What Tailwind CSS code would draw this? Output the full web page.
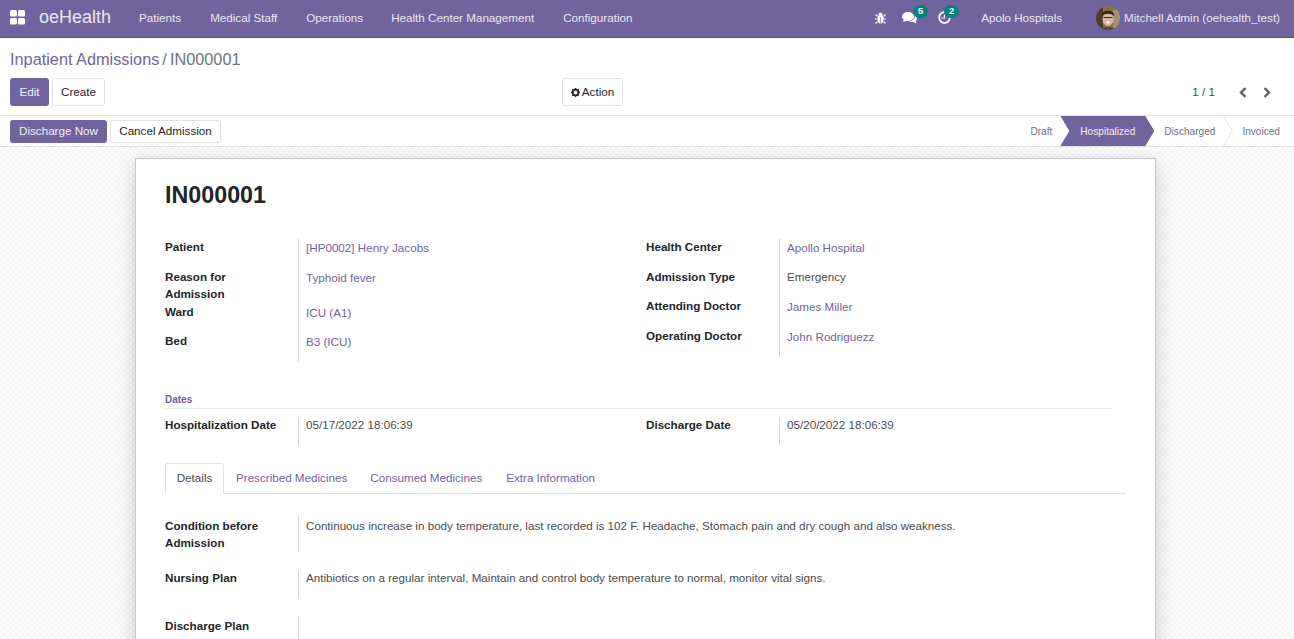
<!DOCTYPE html>
<html lang="en">
<head>
  <meta charset="UTF-8" />
  <title>Inpatient Admissions - IN000001</title>
  <script src="https://cdn.jsdelivr.net/npm/@tailwindcss/browser@4"></script>
</head>
<body class="h-[639px] overflow-hidden bg-white font-['Liberation_Sans',Arial,sans-serif] text-[11.65px] text-[#4c4c4c]">
  <!-- Top navbar -->
  <nav class="flex h-[38px] items-center border-b border-[#5f5389] bg-[#71639e] pb-[2px] text-white/85">
    <svg class="ml-[10px] h-[15px] w-[15px]" viewBox="0 0 15 15" fill="#fff"><rect x="0" y="0" width="7" height="6.5" rx="1.5"/><rect x="8" y="0" width="7" height="6.5" rx="1.5"/><rect x="0" y="8" width="7" height="6.5" rx="1.5"/><rect x="8" y="8" width="7" height="6.5" rx="1.5"/></svg>
    <span class="ml-[14px] text-[18px] text-white/85">oeHealth</span>
    <span class="ml-[28px]">Patients</span>
    <span class="ml-[29px]">Medical Staff</span>
    <span class="ml-[29px]">Operations</span>
    <span class="ml-[28px]">Health Center Management</span>
    <span class="ml-[29px]">Configuration</span>
    <div class="ml-auto flex items-center">
      <svg class="h-[12px] w-[11px]" viewBox="0 0 11 12" fill="#fff"><ellipse cx="5.5" cy="7" rx="3" ry="4.5"/><circle cx="5.5" cy="2.4" r="2"/><path d="M5.500 5V11.500" stroke="#71639e" stroke-width="0.700"/><path d="M0.5 2.5 2.5 4.500M10.5 2.5 8.500 4.500M0 7H2.500M11 7H8.500M0.500 11.500 2.500 9.500M10.500 11.500 8.500 9.500" stroke="#fff" stroke-width="1.100"/></svg>
      <div class="relative ml-[16px] h-[14px] w-[15px]">
        <svg class="h-[14px] w-[15px]" viewBox="0 0 15 14" fill="#fff"><ellipse cx="6" cy="5.500" rx="6" ry="4.500"/><path d="M2 8 1 11 5 9.500Z"/><path d="M13 4.500C15.500 6.500 15 9 13.500 10L14.500 12.500 11 11C9 11.300 7.500 11 6.500 10.500 10 10.500 13 8 13 4.500Z"/></svg>
        <span class="absolute -right-[11px] -top-[6px] flex h-[13px] w-[15px] items-center justify-center rounded-full bg-[#00857e] text-[9.500px] font-bold text-white">5</span>
      </div>
      <div class="relative ml-[21px] h-[13px] w-[13px]">
        <svg class="h-[13px] w-[13px]" viewBox="0 0 13 13" fill="none" stroke="#fff" stroke-width="1.800"><circle cx="6.500" cy="6.500" r="5.400"/><path d="M6.500 3.500V7H3.500" stroke-width="1.200"/></svg>
        <span class="absolute -right-[8px] -top-[6px] flex h-[13px] w-[15px] items-center justify-center rounded-full bg-[#00857e] text-[9.500px] font-bold text-white">2</span>
      </div>
      <span class="ml-[30px]">Apolo Hospitals</span>
      <svg class="ml-[34px] h-[24px] w-[24px] rounded-full" viewBox="0 0 24 24"><rect width="24" height="24" fill="#8a6f4e"/><rect x="0" y="0" width="7" height="24" fill="#4f3d2c"/><rect x="17" y="4" width="7" height="20" fill="#a78f6c"/><ellipse cx="12" cy="13" rx="5.500" ry="7" fill="#d8b8a4"/><path d="M6 10C5 3 19 3 18 10 15 7 9 7 6 10Z" fill="#2d221a"/><path d="M7.500 11.500H16.500" stroke="#3a2c22" stroke-width="1.100"/><path d="M9.500 15.500H14.500L12 18Z" fill="#fff"/><path d="M4 24C5 20 19 20 20 24Z" fill="#5a4a3c"/></svg>
      <span class="ml-[4px] mr-[14px]">Mitchell Admin (oehealth_test)</span>
    </div>
  </nav>

  <!-- Control panel -->
  <div class="h-[78px] border-b border-[#dee2e6] px-[10px] pt-[10px]">
    <div class="flex h-[22px] items-center text-[16.3px] text-[#71639e]">
      <span>Inpatient Admissions</span>
      <span class="mx-[3px] text-[#6c757d]">/</span>
      <span class="text-[#6c757d]">IN000001</span>
    </div>
    <div class="mt-[8px] flex h-[28px] items-center">
      <button class="h-[28px] w-[39px] rounded-[3px] bg-[#71639e] text-white/90">Edit</button>
      <button class="ml-[3px] h-[28px] w-[53px] rounded-[3px] border border-[#dee2e6] text-[#212529]">Create</button>
      <button class="ml-[457px] flex h-[28px] w-[61px] items-center justify-center gap-[2px] rounded-[3px] border border-[#dee2e6] text-[#212529]">
        <svg class="h-[9px] w-[9px]" viewBox="0 0 10 10"><circle cx="5" cy="5" r="3.200" fill="none" stroke="#212529" stroke-width="2.200"/><path d="M5 0V10M0 5H10M1.500 1.500 8.500 8.500M8.500 1.500 1.500 8.500" stroke="#212529" stroke-width="1.600" stroke-dasharray="1.800 6.400 1.800 0"/></svg>
        Action
      </button>
      <span class="ml-auto text-[#4c4c4c]">1 / 1</span>
      <svg class="ml-[24px] h-[11px] w-[8px]" viewBox="0 0 8 11" fill="none" stroke="#5f5f5f" stroke-width="2.400"><path d="M6.500 1 2 5.500 6.500 10"/></svg>
      <svg class="ml-[16px] mr-[13px] h-[11px] w-[8px]" viewBox="0 0 8 11" fill="none" stroke="#5f5f5f" stroke-width="2.400"><path d="M1.500 1 6 5.500 1.500 10"/></svg>
    </div>
  </div>

  <!-- Status bar -->
  <div class="flex h-[31px] items-center border-b border-[#dee2e6] pl-[10px]">
    <button class="h-[23px] w-[97px] rounded-[3px] bg-[#71639e] text-white/90">Discharge Now</button>
    <button class="ml-[3px] h-[23px] w-[111px] rounded-[3px] border border-[#dee2e6] text-[#212529]">Cancel Admission</button>
    <div class="ml-auto flex h-[30px] items-center self-start text-[10.1px] text-[#6c757d]">
      <span class="mr-[8px] pt-[2px]">Draft</span>
      <div class="flex h-[30px] w-[94px] items-center bg-[#71639e] pl-[20px] pt-[2px] text-white/90 [clip-path:polygon(0_0,85px_0,94px_15px,85px_30px,0_30px,9px_15px)]">Hospitalized</div>
      <span class="ml-[10px] pt-[2px]">Discharged</span>
      <svg class="ml-[8px] h-[30px] w-[10px]" viewBox="0 0 10 30" fill="none" stroke="#dee2e6"><path d="M0.500 0 9.500 15 0.500 30"/></svg>
      <span class="ml-[9px] mr-[14px] pt-[2px]">Invoiced</span>
    </div>
  </div>

  <!-- Form background + sheet -->
  <div class="h-[492px] bg-[#f9f9f9] bg-[repeating-conic-gradient(#f6f6f6_0_25%,#fbfbfb_0_50%)] bg-[length:6px_6px] pl-[135px] pt-[11px]">
    <div class="h-[600px] w-[1021px] border border-[#c8c8d0] bg-white pl-[29px] pr-[28px] shadow-[0_5px_20px_-1px_rgba(0,0,0,0.2)]">
      <h1 class="mt-[21px] h-[31px] text-[23.3px] leading-[30px] font-bold text-[#212529]">IN000001</h1>

      <div class="mt-[28px] flex">
        <div class="w-[481px]">
          <div class="flex h-[30px]"><div class="-mt-px w-[133px] font-bold text-[#212529]">Patient</div><div class="border-l border-[#ced4da] pl-[7px] text-[#71639e]">[HP0002] Henry Jacobs</div></div>
          <div class="flex h-[35px]"><div class="-mt-px w-[133px] font-bold leading-[17px] text-[#212529]">Reason for<br />Admission</div><div class="border-l border-[#ced4da] pl-[7px] text-[#71639e]">Typhoid fever</div></div>
          <div class="flex h-[29px]"><div class="-mt-px w-[133px] font-bold text-[#212529]">Ward</div><div class="border-l border-[#ced4da] pl-[7px] text-[#71639e]">ICU (A1)</div></div>
          <div class="flex h-[29px]"><div class="-mt-px w-[133px] font-bold text-[#212529]">Bed</div><div class="border-l border-[#ced4da] pl-[7px] text-[#71639e]">B3 (ICU)</div></div>
        </div>
        <div class="w-[481px]">
          <div class="flex h-[30px]"><div class="-mt-px w-[133px] font-bold text-[#212529]">Health Center</div><div class="border-l border-[#ced4da] pl-[7px] text-[#71639e]">Apollo Hospital</div></div>
          <div class="flex h-[29px]"><div class="-mt-px w-[133px] font-bold text-[#212529]">Admission Type</div><div class="border-l border-[#ced4da] pl-[7px] leading-[15px]">Emergency</div></div>
          <div class="flex h-[30px]"><div class="-mt-px w-[133px] font-bold text-[#212529]">Attending Doctor</div><div class="border-l border-[#ced4da] pl-[7px] text-[#71639e]">James Miller</div></div>
          <div class="flex h-[29px]"><div class="-mt-px w-[133px] font-bold text-[#212529]">Operating Doctor</div><div class="border-l border-[#ced4da] pl-[7px] text-[#71639e]">John Rodriguezz</div></div>
        </div>
      </div>

      <div class="mt-[30px] h-[17px] w-[947px] border-b border-[#e9ecef] text-[10px] font-bold leading-[15px] text-[#71639e]">Dates</div>
      <div class="mt-[8px] flex">
        <div class="flex h-[28px] w-[481px]"><div class="-mt-px w-[133px] font-bold text-[#212529]">Hospitalization Date</div><div class="border-l border-[#ced4da] pl-[7px] leading-[15px]">05/17/2022 18:06:39</div></div>
        <div class="flex h-[28px] w-[481px]"><div class="-mt-px w-[133px] font-bold text-[#212529]">Discharge Date</div><div class="border-l border-[#ced4da] pl-[7px] leading-[15px]">05/20/2022 18:06:39</div></div>
      </div>

      <!-- Tabs -->
      <div class="mt-[18px] flex h-[31px] w-[961px] border-b border-[#dee2e6] text-[#71639e]">
        <div class="flex h-[31px] w-[59px] items-center justify-center rounded-t-[3px] border border-b-0 border-[#dee2e6] bg-white pb-[2px] text-[#4c4c4c]">Details</div>
        <div class="ml-[12px] pt-[6px]">Prescribed Medicines</div>
        <div class="ml-[23px] pt-[6px]">Consumed Medicines</div>
        <div class="ml-[24px] pt-[6px]">Extra Information</div>
      </div>

      <div class="mt-[22px] flex h-[36px]"><div class="w-[133px] pt-[1px] font-bold leading-[17px] text-[#212529]">Condition before<br />Admission</div><div class="border-l border-[#ced4da] pl-[7px] pt-[1px]">Continuous increase in body temperature, last recorded is 102 F. Headache, Stomach pain and dry cough and also weakness.</div></div>
      <div class="mt-[18px] flex h-[29px]"><div class="-mt-px w-[133px] font-bold text-[#212529]">Nursing Plan</div><div class="border-l border-[#ced4da] pl-[7px] leading-[15px]">Antibiotics on a regular interval, Maintain and control body temperature to normal, monitor vital signs.</div></div>
      <div class="mt-[17px] flex h-[36px]"><div class="w-[133px] pt-px font-bold text-[#212529]">Discharge Plan</div><div class="border-l border-[#ced4da] pl-[7px]"></div></div>
    </div>
  </div>
</body>
</html>
